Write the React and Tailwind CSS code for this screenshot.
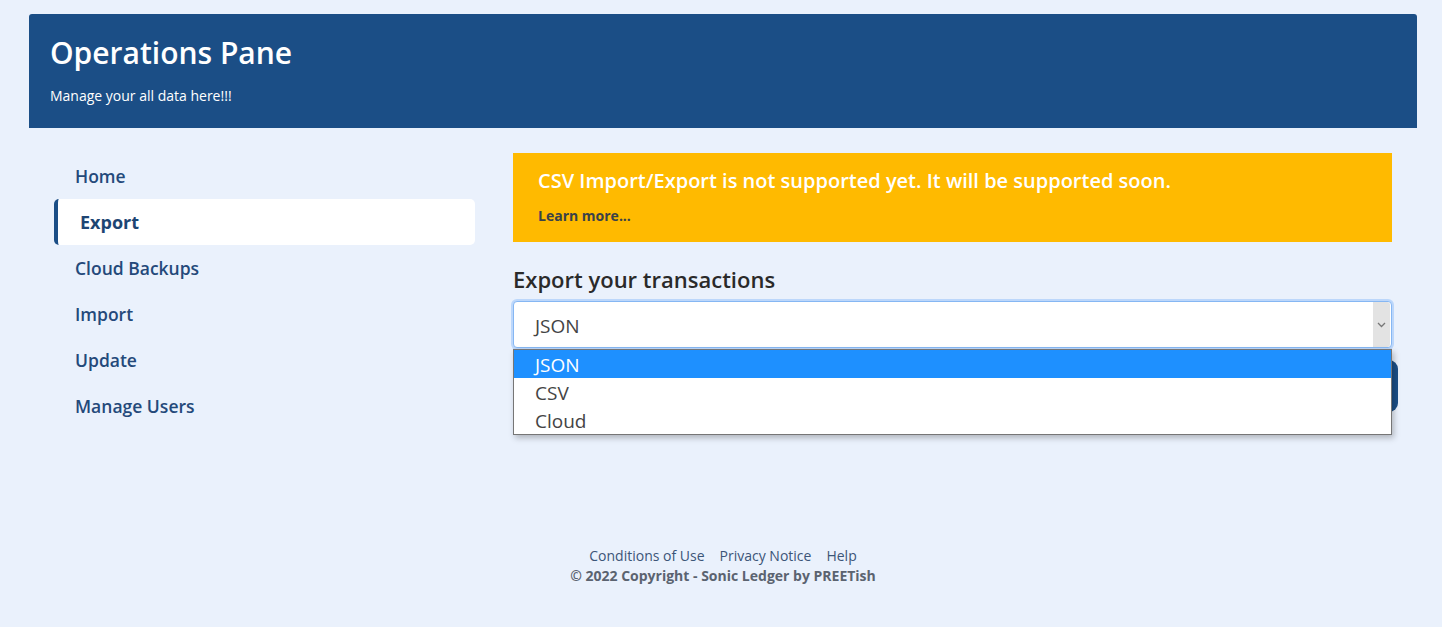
import React from "react";

const navItems = ["Home", "Export", "Cloud Backups", "Import", "Update", "Manage Users"];

const App = () => {
  const active = "Export";
  const options = ["JSON", "CSV", "Cloud"];

  return (
    <div
      className="min-h-[627px] bg-[#eaf1fc] pl-[29px] pr-[25px] pt-[14px]"
      style={{ fontFamily: '"Open Sans", "Noto Sans", sans-serif' }}
    >
      <header className="h-[114px] rounded-t-[3px] bg-[#1b4e86] px-[21px] pt-[19px] text-white">
        <h1 className="text-[30px] font-semibold leading-[40px]">Operations Pane</h1>
        <p className="mt-[14px] text-[14px] leading-[18px]">Manage your all data here!!!</p>
      </header>

      <div className="flex gap-[38px] px-[25px] pt-[25px]">
        <nav className="flex w-[421px] shrink-0 flex-col">
          {navItems.map((item) =>
            item === active ? (
              <div
                key={item}
                className="flex h-[46px] items-center rounded-[5px] border-l-4 border-[#1b4e86] bg-white pl-[22px] text-[18px] font-bold text-[#1d4573]"
              >
                {item}
              </div>
            ) : (
              <div
                key={item}
                className="flex h-[46px] items-center pl-[21px] text-[17.5px] font-semibold text-[#24497a]"
              >
                {item}
              </div>
            )
          )}
        </nav>

        <main className="min-w-0 flex-1">
          <div className="bg-[#ffba00] px-[25px] pt-[14px] pb-[16px]">
            <p className="text-[20px] font-semibold leading-[27px] text-white">
              CSV Import/Export is not supported yet. It will be supported soon.
            </p>
            <p className="mt-[12px] text-[14px] font-bold leading-[20px] text-[#3a4149]">Learn more...</p>
          </div>

          <h2 className="mt-[22px] text-[22px] font-semibold leading-[30px] text-[#2a2a2a]">
            Export your transactions
          </h2>

          <div className="relative mt-[7px]">
            <div className="flex h-[47px] items-center rounded-[4px] border border-[#86b7f3] bg-white shadow-[0_0_0_2px_#bcd7fb]">
              <span className="flex-1 pl-[21px] pt-[3px] text-[19px] text-[#444]">JSON</span>
              <span className="mr-[1px] flex h-[45px] w-[17px] items-center justify-center rounded-r-[3px] bg-[#e3e3e3]">
                <svg width="9" height="6" viewBox="0 0 9 6" fill="none">
                  <path d="M1 1l3.5 3.5L8 1" stroke="#777" strokeWidth="1.3" />
                </svg>
              </span>
            </div>

            <button className="mt-[12px] h-[52px] w-[calc(100%+6px)] rounded-[9px] bg-[#1b4e86] text-[18px] font-semibold text-white">
              Export
            </button>

            <ul className="absolute left-0 right-0 top-[48px] border border-[#767676] bg-white shadow-[2px_3px_6px_rgba(0,0,0,0.25)]">
              {options.map((opt, i) => (
                <li
                  key={opt}
                  className={
                    i === 0
                      ? "h-[28px] bg-[#1e90ff] pl-[21px] pt-[1px] text-[19px] leading-[28px] text-white"
                      : "h-[28px] pl-[21px] pt-[1px] text-[19px] leading-[28px] text-[#444]"
                  }
                >
                  {opt}
                </li>
              ))}
            </ul>
          </div>
        </main>
      </div>

      <footer className="mt-[117px] text-center text-[14px] leading-[20px]">
        <div className="flex justify-center gap-[15px] text-[#3c5578]">
          <a>Conditions of Use</a>
          <a>Privacy Notice</a>
          <a>Help</a>
        </div>
        <p className="font-bold text-[#5b6370]">© 2022 Copyright - Sonic Ledger by PREETish</p>
      </footer>
    </div>
  );
};

export default App;
